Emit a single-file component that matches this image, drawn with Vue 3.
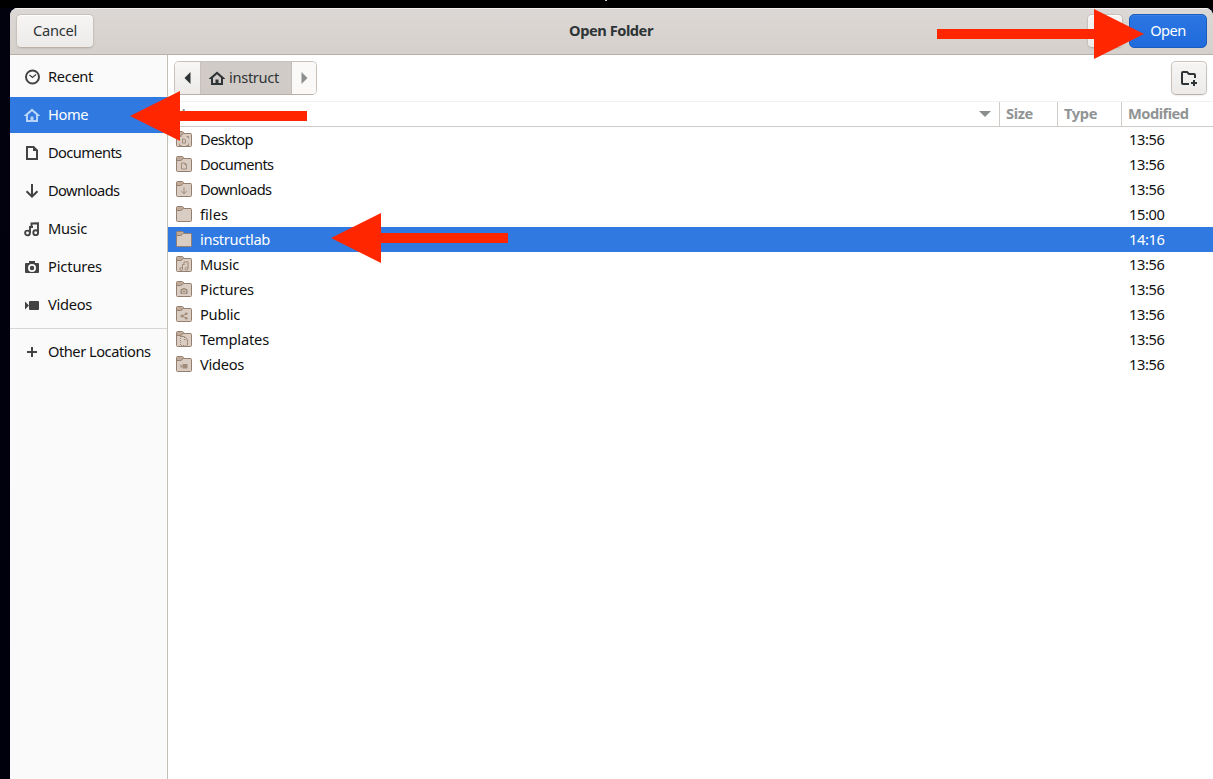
<script setup>
const places = [
  { name: 'Recent', icon: 'recent', w: 45 },
  { name: 'Home', icon: 'home', w: 40, active: true },
  { name: 'Documents', icon: 'doc', w: 73.500 },
  { name: 'Downloads', icon: 'down', w: 71.500 },
  { name: 'Music', icon: 'music', w: 39 },
  { name: 'Pictures', icon: 'camera', w: 54 },
  { name: 'Videos', icon: 'video', w: 44 },
]
const files = [
  { name: 'Desktop', icon: 'desktop', time: '13:56', w: 53 },
  { name: 'Documents', icon: 'doc', time: '13:56', w: 73.500 },
  { name: 'Downloads', icon: 'down', time: '13:56', w: 71.500 },
  { name: 'files', icon: '', time: '15:00', w: 28 },
  { name: 'instructlab', icon: '', time: '14:16', w: 70, selected: true },
  { name: 'Music', icon: 'music', time: '13:56', w: 39 },
  { name: 'Pictures', icon: 'camera', time: '13:56', w: 54 },
  { name: 'Public', icon: 'share', time: '13:56', w: 40 },
  { name: 'Templates', icon: 'template', time: '13:56', w: 69 },
  { name: 'Videos', icon: 'video', time: '13:56', w: 44 },
]

// Fits a label to its column width by spreading or tightening the letters.
const vFit = {
  mounted(el, { value }) {
    const natural = el.getBoundingClientRect().width
    el.style.letterSpacing = (value - natural) / el.textContent.length + 'px'
  },
}
</script>

<template>
  <div class="desktop">
    <span class="clock-dot"></span>
    <svg class="defs" width="0" height="0">
      <symbol id="recent" viewBox="0 0 16 16"><circle cx="8.500" cy="8" r="6.500" fill="none" stroke="currentColor" stroke-width="2" /><path d="M5.500 6l3 2.500L12 5.500" fill="none" stroke="currentColor" stroke-width="1.300" /></symbol>
      <symbol id="home" viewBox="0 0 16 16"><path d="M0 8.500L8 1.500l8 7v.5h-2.800L8 4.200 2.800 9H0z" fill="currentColor" /><path d="M3 8v6h10V8" fill="none" stroke="currentColor" stroke-width="2" /><path d="M6.500 9.500h3V14h-3z" fill="currentColor" /></symbol>
      <symbol id="doc" viewBox="0 0 16 16"><path d="M3 2h6.500L13 5.500V14H3z" fill="none" stroke="currentColor" stroke-width="2" /><path d="M9 1v5h5z" fill="currentColor" /></symbol>
      <symbol id="down" viewBox="0 0 16 16"><path d="M8 1v12M2.500 8.200L8 13.500l5.500-5.300" fill="none" stroke="currentColor" stroke-width="2" /></symbol>
      <symbol id="music" viewBox="0 0 16 16"><path d="M6 12V6h3M14 11.500V2.200L7.500 2.500V6" fill="none" stroke="currentColor" stroke-width="1.900" /><circle cx="3.500" cy="12" r="2.400" fill="none" stroke="currentColor" stroke-width="1.900" /><circle cx="11.700" cy="11.700" r="2.400" fill="none" stroke="currentColor" stroke-width="1.900" /></symbol>
      <symbol id="note" viewBox="0 0 10 10"><path d="M3.500 8V3.500h2M9 7.500V.8L5 1v2.500" fill="none" stroke="currentColor" /><circle cx="2.200" cy="8" r="1.400" fill="none" stroke="currentColor" /><circle cx="7.500" cy="7.800" r="1.400" fill="none" stroke="currentColor" /></symbol>
      <symbol id="camera" viewBox="0 0 16 16"><path fill-rule="evenodd" fill="currentColor" d="M5 2h6v2h3q1 0 1 1v8q0 1-1 1H2q-1 0-1-1V5q0-1 1-1h3zM8 5a4 4 0 1 0 0 8a4 4 0 0 0 0-8zM8 6.800a2.200 2.200 0 1 1 0 4.400a2.200 2.200 0 0 1 0-4.400z" /></symbol>
      <symbol id="video" viewBox="0 0 16 16"><path d="M1 4.500v8l4-4z" fill="currentColor" /><rect x="5" y="4" width="10" height="9" rx="1" fill="currentColor" /></symbol>
      <symbol id="share" viewBox="0 0 16 16"><path d="M13 3.500L4 8l9 4.500" fill="none" stroke="currentColor" stroke-width="2" /><circle cx="12.500" cy="3.500" r="2.700" fill="currentColor" /><circle cx="4" cy="8" r="3" fill="currentColor" /><circle cx="12.500" cy="12.500" r="2.700" fill="currentColor" /></symbol>
      <symbol id="desktop" viewBox="0 0 10 10"><path d="M.5 2.500v-2h2M7.500.5h2v2M.5 7.500v2h2M7.500 9.500h2v-2" fill="none" stroke="currentColor" /><path d="M3.500 3h2l1 1v3h-3z" fill="none" stroke="currentColor" /></symbol>
      <symbol id="template" viewBox="0 0 10 10"><path d="M1 .5h4.500l3 3V9.500" fill="none" stroke="currentColor" /><path d="M5.500 1v3h3M1.500 2v8M2 9.500h6" fill="none" stroke="currentColor" stroke-dasharray="1 1" /></symbol>
      <symbol id="folder" viewBox="0 0 16 16"><path d="M.5 1.500q0-1 1-1h4.700q.7 0 1.100.6l.9 1.400h6.300q1 0 1 1v11q0 1-1 1h-13q-1 0-1-1z" fill="#d9cdc3" stroke="#95806f" /><path d="M1 1.500q0-.5.500-.5h4.700l1 1.700-1.900 2.300H1z" fill="#c0aa99" /><path d="M1 4.500h3.500q.8 0 1.200-.6l.7-.9q.4-.5 1-.5H15" fill="none" stroke="#95806f" /></symbol>
    </svg>

    <div class="window">
      <header class="titlebar">
        <button class="btn cancel"><span v-fit="44">Cancel</span></button>
        <h1><span v-fit="84">Open Folder</span></h1>
        <div class="actions">
          <button class="btn search" aria-label="Search"></button>
          <button class="btn open"><span v-fit="35.5">Open</span></button>
        </div>
      </header>
      <div class="body">
        <aside>
          <div v-for="p in places" :key="p.name" class="place" :class="{ active: p.active }">
            <svg class="ic"><use :href="'#' + p.icon" /></svg><span class="label" v-fit="p.w">{{ p.name }}</span>
          </div>
          <div class="sep"></div>
          <div class="place">
            <svg class="ic" viewBox="0 0 16 16"><path d="M8 3v10M3 8h10" stroke="currentColor" stroke-width="2" /></svg><span class="label" v-fit="102.5">Other Locations</span>
          </div>
        </aside>
        <main>
          <div class="pathbar">
            <div class="crumbs">
              <span class="step"><svg width="7" height="12"><path d="M6.500 0v12L.5 6z" fill="#2e3436" /></svg></span>
              <span class="crumb"><svg class="ic"><use href="#home" /></svg><span class="label" v-fit="50">instruct</span></span>
              <span class="step next"><svg width="7" height="12"><path d="M.5 0v12l6-6z" fill="#8b8e8f" /></svg></span>
            </div>
            <button class="btn newfolder" aria-label="Create folder">
              <svg width="18" height="18" viewBox="0 0 18 18"><path d="M9 15H3q-1 0-1-1V4q0-1 1-1h4l2 2h5q1 0 1 1v3" fill="none" stroke="#2e3436" stroke-width="2" /><path d="M14 11v6M11 14h6" stroke="#2e3436" stroke-width="2" /></svg>
            </button>
          </div>
          <div class="cols">
            <span class="c name"><span class="label" v-fit="42">Name</span><svg width="12" height="6"><path d="M0 0h12L6 6z" fill="#8b8e8f" /></svg></span>
            <span class="c size"><span class="label" v-fit="27">Size</span></span>
            <span class="c type"><span class="label" v-fit="33">Type</span></span>
            <span class="c mod"><span class="label" v-fit="60.5">Modified</span></span>
          </div>
          <div v-for="f in files" :key="f.name" class="row" :class="{ selected: f.selected }">
            <span class="folder">
              <svg width="16" height="16"><use href="#folder" /></svg>
              <svg v-if="f.icon" class="emblem" :class="'on-' + f.icon"><use :href="f.icon === 'music' ? '#note' : '#' + f.icon" /></svg>
            </span>
            <span class="fname"><span v-fit="f.w">{{ f.name }}</span></span>
            <span class="time"><span v-fit="35.5">{{ f.time }}</span></span>
          </div>
        </main>
      </div>
    </div>

    <svg class="arrows" width="1213" height="779" fill="#ff2600">
      <path d="M130 116l50-25v20h127v10H180v20z" />
      <path d="M331 238l50-25v20h127v10H381v20z" />
      <path d="M1144 34l-50-25v20H937v10h157v20z" />
    </svg>
  </div>
</template>

<style>
html, body { margin: 0; overflow: hidden; }
</style>

<style scoped>
* { box-sizing: border-box; }
.desktop { position: relative; width: 1213px; height: 779px; padding: 8px 0 0 10px; overflow: hidden; background: linear-gradient(#000 8px, #02020f 8px, #00000c); font: 14.67px/20px "Noto Sans", "Open Sans", sans-serif; color: #111; }
.defs { position: absolute; }
.clock-dot { position: absolute; left: 605px; top: 0; width: 2px; height: 1px; background: #ccc; }
.arrows { position: absolute; left: 0; top: 0; }
.window { height: 771px; display: flex; flex-direction: column; border-radius: 8px 8px 0 0; overflow: hidden; background: #fff; }
.titlebar { position: relative; height: 47px; flex: none; display: flex; align-items: center; justify-content: space-between; padding: 0 6px; background: linear-gradient(#dcd8d5, #d5d0cc); border-bottom: 1px solid #b9b0a9; box-shadow: inset 0 1px #f3f1ef; }
h1 { position: absolute; left: 0; right: 0; top: 12px; margin: 0 0 0 -1px; text-align: center; font: bold 14.67px/20px "Noto Sans", sans-serif; color: #2e3436; }
.btn { display: flex; align-items: center; justify-content: center; height: 34px; padding: 0 0 2px; border: 1px solid #c9c2bc; border-bottom-color: #b9b0a9; border-radius: 5px; background: linear-gradient(#f6f5f4, #edebe9); box-shadow: inset 0 1px #fff, 0 1px 2px rgba(0, 0, 0, .07); font: inherit; color: #2e3436; }
.cancel { width: 78px; }
.actions { display: flex; gap: 6px; }
.search { width: 36px; }
.open { width: 78px; border-color: #1b5bbd; background: linear-gradient(#2b76e2, #206bdc); box-shadow: inset 0 1px #3b80e2; color: #fff; }
.body { flex: 1; display: flex; min-height: 0; }
aside { width: 158px; padding-top: 4px; border-right: 1px solid #c5bfba; background: #fafafa; }
.place { display: flex; align-items: center; gap: 8px; height: 36px; margin-bottom: 2px; padding-left: 14px; color: #111; white-space: nowrap; }
.label { padding-bottom: 2px; }
.ic { width: 16px; height: 16px; flex: none; color: #434343; }
.active { background: #3079e0; color: #fff; }
.active .ic { color: #b9d4fb; }
.sep { height: 1px; margin: 5px 0; background: #d8d5d2; }
main { flex: 1; }
.pathbar { height: 46px; display: flex; justify-content: space-between; padding: 6px; }
.crumbs { display: flex; width: 143px; height: 34px; border: 1px solid #c9c2bc; border-bottom-color: #b9b0a9; border-radius: 5px; overflow: hidden; }
.step { width: 26px; display: flex; align-items: center; justify-content: center; background: linear-gradient(#f8f7f6, #edebe9); border-right: 1px solid #c9c2bc; }
.step.next { width: 24px; border: 0; background: #faf9f8; }
.crumb { flex: 1; display: flex; align-items: center; gap: 4px; padding-left: 8px; background: #d1cbc7; border-right: 1px solid #c4bdb7; color: #2e3436; }
.crumb .ic { color: #2e3436; }
.newfolder { width: 36px; padding-bottom: 0; }
.cols { height: 26px; display: flex; border-top: 1px solid #f2f1f0; border-bottom: 1px solid #d0cbc7; font-weight: bold; color: #919495; }
.c { display: flex; align-items: center; padding-left: 6px; border-right: 1px solid #d0cbc7; }
.name { width: 832px; justify-content: space-between; padding-right: 8px; }
.size { width: 58px; }
.type { width: 64px; }
.mod { flex: 1; border: 0; }
.row { display: flex; align-items: center; height: 25px; padding-left: 8px; }
.row.selected { background: #3079e0; color: #fff; }
.folder { position: relative; width: 24px; height: 16px; margin-bottom: 1px; }
.folder > svg { display: block; }
.folder .emblem { position: absolute; left: 4px; top: 6px; width: 8px; height: 8px; color: #a18b79; }
.folder .on-desktop, .folder .on-template, .folder .on-music { left: 3px; top: 5px; width: 10px; height: 10px; }
.fname { flex: 1; padding-bottom: 2px; }
.time { width: 84px; padding-bottom: 2px; }
</style>
